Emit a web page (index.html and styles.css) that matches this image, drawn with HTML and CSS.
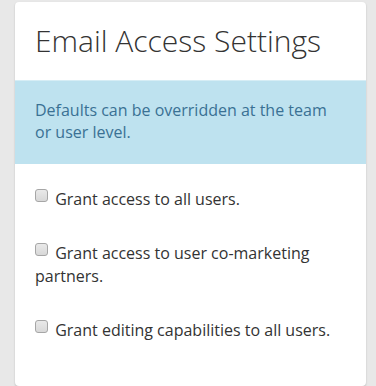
FILE: index.html
```html
<!DOCTYPE html>
<html lang="en">
<head>
    <meta charset="UTF-8">
    <meta name="viewport" content="width=device-width, initial-scale=1.0">
    <title>Email Access Settings</title>
    <link rel="stylesheet" href="styles.css">
</head>
<body>

    <div class="panel">
        <div class="panel-heading">
            <h2>Email Access Settings</h2>
        </div>

        <!-- Aviso informativo -->
        <div class="alert-info">
            Defaults can be overridden at the team or user level.
        </div>

        <!-- Opciones de acceso -->
        <div class="options">
            <label class="option"><input type="checkbox"> Grant access to all users.</label>
            <label class="option"><input type="checkbox"> Grant access to user co-marketing partners.</label>
            <label class="option"><input type="checkbox"> Grant editing capabilities to all users.</label>
        </div>
    </div>

</body>
</html>
```

FILE: styles.css
```css
body {
    margin: 0;
    padding: 2px 10px 4px 15px;
    background: #e8e8e8;
    font-family: "Open Sans", Arial, sans-serif;
    color: #333;
}

.panel {
    width: 351px;
    background: #fff;
    border-radius: 4px;
    box-shadow: 0 1px 2px rgba(0, 0, 0, 0.2);
    overflow: hidden;
}

.panel-heading {
    padding: 22px 20px 23px;
}

.panel-heading h2 {
    margin: 0;
    font-size: 30px;
    font-weight: 300;
    line-height: 33px;
    color: #333;
}

.alert-info {
    background: #bee2ef;
    border-top: 1px solid #d6edf5;
    color: #3a7194;
    font-size: 16px;
    line-height: 22px;
    padding: 18px 20px 21px;
}

.options {
    display: flex;
    flex-direction: column;
    gap: 29px;
    padding: 22px 20px 45px;
}

.option {
    font-size: 16px;
    line-height: 22.86px;
    color: #333;
}

.option input[type="checkbox"] {
    appearance: none;
    -webkit-appearance: none;
    width: 13px;
    height: 13px;
    margin: 3px 3px 3px 0;
    border: 1px solid #a6a6a6;
    border-radius: 3px;
    background: linear-gradient(#e9e9e9, #d8d8d8);
    box-sizing: border-box;
    vertical-align: baseline;
}
```
